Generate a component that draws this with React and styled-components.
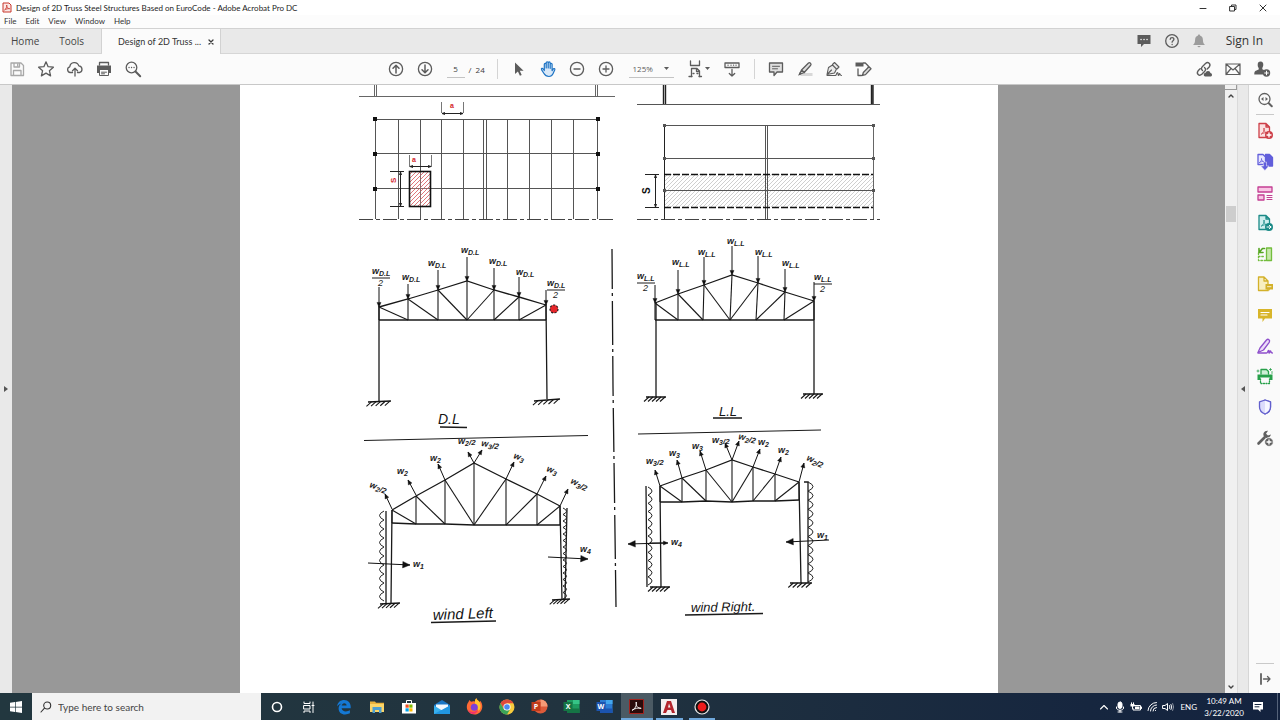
import React from "react";
import styled, { createGlobalStyle } from "styled-components";

const GlobalStyle = createGlobalStyle`
  *, *::before, *::after { box-sizing: border-box; }
  html, body { margin: 0; padding: 0; }
  body {
    font-family: "Open Sans", "Noto Sans", sans-serif;
    color: #3c3c3c;
    background: #fff;
  }
  button, input, select { font: inherit; color: inherit; }
`;

/* ---------- window chrome ---------- */

const Window = styled.div`
  display: flex;
  flex-direction: column;
  height: 100vh;
  overflow: hidden;
`;

const TitleBar = styled.header`
  display: flex;
  align-items: center;
  height: 15px;
  flex: none;
  padding-left: 2px;
  background: #fff;
`;

const Title = styled.h1`
  flex: 1;
  margin: 0 0 0 4px;
  font: 400 8px/14px "Lato", "Open Sans", sans-serif;
  color: #1c1c1c;
  white-space: nowrap;
`;

const WindowControls = styled.div`
  display: flex;
  padding-right: 2px;
`;

const PlainButton = styled.button`
  display: flex;
  align-items: center;
  justify-content: center;
  padding: 0;
  border: 0;
  background: transparent;
  line-height: 1;
  white-space: nowrap;
`;

const ControlButton = styled(PlainButton)`
  width: 30px;
  height: 14px;
  color: #333;
`;

const MenuBar = styled.nav`
  display: flex;
  gap: 9px;
  flex: none;
  height: 13px;
  padding-left: 4px;
  background: #fcfcfc;
`;

const MenuButton = styled(PlainButton)`
  font: 400 8px/13px "Lato", "Open Sans", sans-serif;
  color: #333;
`;

const TabBar = styled.div`
  display: flex;
  align-items: stretch;
  flex: none;
  height: 26px;
  border-top: 1px solid #d2d2d2;
  border-bottom: 1px solid #d6d6d6;
  background: #e9e9e9;
`;

const HomeTabs = styled.div`
  display: flex;
  gap: 20px;
  width: 102px;
  padding-left: 11px;
  border-right: 1px solid #d2d2d2;
`;

const TabButton = styled(PlainButton)`
  font-size: 10px;
  color: #444;
`;

const DocumentTabButton = styled(PlainButton)`
  font: 400 9px/12px "Lato", "Open Sans", sans-serif;
  color: #333;
`;

const DocumentTab = styled.div`
  display: flex;
  align-items: center;
  justify-content: space-between;
  width: 119px;
  margin-bottom: -1px;
  padding: 0 6px 0 16px;
  border-right: 1px solid #d2d2d2;
  background: #fbfbfb;
`;

const AccountTools = styled.div`
  display: flex;
  align-items: center;
  margin-left: auto;
  padding-right: 17px;
`;

const SignIn = styled(PlainButton)`
  margin-left: 13px;
  font-size: 12px;
  color: #333;
`;

/* ---------- toolbar ---------- */

const Toolbar = styled.div`
  display: grid;
  grid-template-columns: 1fr auto 1fr;
  align-items: center;
  flex: none;
  height: 30px;
  padding: 0 4px 0 2px;
  background: #fbfbfb;
`;

const ToolGroup = styled.div`
  display: flex;
  align-items: center;
  justify-content: ${(p) => p.$align || "flex-start"};
  margin-right: ${(p) => p.$trail || 0}px;
`;

const ToolButton = styled(PlainButton)`
  width: ${(p) => p.$width || 29}px;
  height: 24px;
  margin-left: ${(p) => p.$gap || 0}px;
  color: ${(p) => p.$color || "#5c5c5c"};
`;

const Divider = styled.span`
  width: 1px;
  height: 20px;
  margin: 0 7px 0 ${(p) => p.$before}px;
  background: #d4d4d4;
`;

const PageInput = styled.input`
  width: 18px;
  height: 18px;
  margin-left: 7px;
  padding: 0;
  border: 0;
  border-bottom: 1px solid #c4c4c4;
  background: transparent;
  font-size: 8px;
  text-align: center;
`;

const PageTotal = styled.span`
  width: 16px;
  margin-left: 4px;
  font-size: 8px;
  white-space: nowrap;
`;

const ZoomField = styled.label`
  display: flex;
  align-items: center;
  width: 45px;
  height: 18px;
  margin-left: 8px;
  padding-left: 4px;
  border-bottom: 1px solid #c4c4c4;
  color: #5c5c5c;
`;

const ZoomSelect = styled.select`
  width: 30px;
  padding: 0;
  border: 0;
  background: transparent;
  appearance: none;
  font-size: 8px;
`;

/* ---------- workspace ---------- */

const Workspace = styled.div`
  display: flex;
  flex: 1;
  min-height: 0;
  border-top: 1px solid #c8c8c8;
`;

const SideStrip = styled(PlainButton)`
  width: 12px;
  flex: none;
  align-self: stretch;
  border-left: ${(p) => (p.$right ? "1px solid #dadada" : "0")};
  border-right: ${(p) => (p.$right ? "1px solid #d6d6d6" : "0")};
  background: #e9e9e9;
  color: #555;
`;

const DocumentPane = styled.main`
  display: flex;
  justify-content: center;
  flex: 1;
  min-width: 0;
  overflow: hidden;
  background: #989898;
`;

const Page = styled.article`
  width: 758px;
  flex: none;
  background: #fff;
`;

const Drawing = styled.svg`
  display: block;
  width: 100%;
  font-family: "Liberation Sans", sans-serif;
`;

const ScrollTrack = styled.div`
  display: flex;
  flex-direction: column;
  align-items: center;
  width: 12px;
  flex: none;
  background: #f0f0f0;
`;

const SplitHandle = styled.div`
  width: 100%;
  height: 5px;
  border-right: 1px solid #999;
  border-bottom: 1px solid #999;
`;

const ScrollThumb = styled.div`
  width: 10px;
  height: 16px;
  margin-top: 104px;
  background: #cdcdcd;
`;

const ScrollArrow = styled(PlainButton)`
  width: 12px;
  height: 12px;
  margin-top: ${(p) => (p.$end ? "auto" : 0)};
  color: #444;
`;

const ToolsPane = styled.aside`
  display: flex;
  flex-direction: column;
  align-items: center;
  width: 31px;
  flex: none;
  background: #fafafa;
`;

const ToolsList = styled.div`
  display: grid;
  grid-auto-rows: 1fr;
  height: 337px;
  margin-top: 1px;
`;

const PaneButton = styled(PlainButton)`
  width: 30px;
  min-height: 29px;
  color: #606060;
`;

const PaneRule = styled.hr`
  width: 18px;
  height: 1px;
  margin: ${(p) => (p.$end ? "auto 0 0" : "0")};
  border: 0;
  background: #c9c9c9;
`;

/* ---------- taskbar ---------- */

const Taskbar = styled.footer`
  display: flex;
  align-items: stretch;
  flex: none;
  height: 27px;
  background: linear-gradient(90deg, #22373f 0%, #21333f 45%, #16263f 85%, #14233f 100%);
  color: #fff;
`;

const TaskButton = styled(PlainButton)`
  width: 32px;
`;

const SearchBox = styled.label`
  display: flex;
  align-items: center;
  gap: 6px;
  width: 229px;
  padding-left: 8px;
  background: #f2f2f2;
  color: #333;
`;

const SearchInput = styled.input`
  width: 180px;
  padding: 0;
  border: 0;
  outline: 0;
  background: transparent;
  font: 400 10px/14px "Lato", "Open Sans", sans-serif;
  &::placeholder { color: #444; opacity: 1; }
`;

const PinnedApps = styled.nav`
  display: grid;
  grid-auto-flow: column;
  grid-auto-columns: 1fr;
  width: 390px;
  margin-left: 3px;
`;

const AppButton = styled(PlainButton)`
  margin: 0 ${(p) => (p.$active ? 0 : 3)}px;
  padding-top: 2px;
  border-bottom: 2px solid ${(p) => (p.$running ? "#6fa8dc" : "transparent")};
  background: ${(p) => (p.$active ? "#4b5a64" : "transparent")};
  background-clip: padding-box;
`;

const Tray = styled.div`
  display: flex;
  align-items: center;
  margin-left: auto;
  font-size: 8px;
`;

const TrayButton = styled(PlainButton)`
  width: 16px;
  height: 20px;
`;

const Language = styled.span`
  margin-left: 4px;
  font: 400 8px/12px "Lato", sans-serif;
`;

const Clock = styled.time`
  width: 40px;
  margin-left: 7px;
  font: 400 8px/12px "Lato", sans-serif;
  text-align: center;
  white-space: nowrap;
`;

const ActionCenter = styled(TrayButton)`
  width: 28px;
  margin-right: 5px;
`;

const ShowDesktop = styled(PlainButton)`
  align-self: stretch;
  width: 3px;
  border-left: 1px solid #55637a;
`;

/* ---------- icons ---------- */

const Svg = ({ w = 18, h = w, children, sw = 1.3 }) => (
  <svg
    width={w}
    height={h}
    viewBox={`0 0 ${w} ${h}`}
    fill="none"
    stroke="currentColor"
    strokeWidth={sw}
    strokeLinecap="round"
    strokeLinejoin="round"
    aria-hidden="true"
  >
    {children}
  </svg>
);

const solid = { fill: "currentColor", stroke: "none" };

const icons = {
  save: (
    <Svg>
      <path d="M3 3h10l2.500 2.500V15.500H3z M6 3v4h5.500V3 M5.500 15.500v-5h7.500v5" />
      <path d="M9.700 4v2" />
    </Svg>
  ),
  star: (
    <Svg>
      <path d="M9 1.800l2.100 4.900 5.300.5-4 3.500 1.200 5.200L9 13.100l-4.600 2.800 1.200-5.200-4-3.500 5.300-.5z" />
    </Svg>
  ),
  cloud: (
    <Svg>
      <path d="M6.500 12.500H4.300a2.900 2.900 0 0 1-.5-5.700 4.600 4.600 0 0 1 9-.9 3.400 3.400 0 0 1 .9 6.600h-2.200 M9 16V8.500 M6.500 10.800L9 8.300l2.500 2.500" />
    </Svg>
  ),
  print: (
    <Svg>
      <path d="M4.500 5V2.500h9V5" />
      <path d="M2 5.500h14v7.500h-2v-3H4v3H2z" {...solid} />
      <path d="M4.500 10v5.500h9V10 M6.500 12.200h5 M6.500 13.800h3" strokeWidth="1" />
    </Svg>
  ),
  find: (
    <Svg>
      <circle cx="7.500" cy="7.500" r="5.300" />
      <path d="M11.500 11.500l4.700 4.700" strokeWidth="2" />
      <path d="M5 7.500h.1 M7.500 7.500h.1 M10 7.500h.1" strokeWidth="1.300" />
    </Svg>
  ),
  up: (
    <Svg>
      <circle cx="9" cy="9" r="6.600" />
      <path d="M9 13V5.500 M6 8.300l3-3 3 3" strokeWidth="1.500" />
    </Svg>
  ),
  down: (
    <Svg>
      <circle cx="9" cy="9" r="6.600" />
      <path d="M9 5v7.500 M6 9.700l3 3 3-3" strokeWidth="1.500" />
    </Svg>
  ),
  pointer: (
    <Svg>
      <path d="M5 2.500v11.600l2.900-2.600 2 4.300 1.800-.8-1.900-4.200h3.800z" {...solid} />
    </Svg>
  ),
  hand: (
    <Svg sw="1.200">
      <path
        d="M5.300 10.500V4.300c0-1.300 1.900-1.300 1.900 0V8 2.700c0-1.300 2-1.300 2 0V8 2.900c0-1.300 2-1.300 2 0V8.300 4.300c0-1.300 1.900-1.300 1.900 0v6.300l1-1.500c.7-1 2.100-.4 1.700.7l-1.800 4c-.8 1.800-1.700 2.700-4 2.700-3 0-4-1-5.200-3.200L2.500 9.600c-.5-1.200 1-1.700 1.600-.8z"
        fill="#d8e8f8"
      />
    </Svg>
  ),
  minus: (
    <Svg>
      <circle cx="9" cy="9" r="6.600" />
      <path d="M6 9h6" />
    </Svg>
  ),
  plus: (
    <Svg>
      <circle cx="9" cy="9" r="6.600" />
      <path d="M6 9h6 M9 6v6" />
    </Svg>
  ),
  caret: (
    <Svg w={7} h={5}>
      <path d="M1 1h5L3.500 4z" {...solid} />
    </Svg>
  ),
  fit: (
    <Svg w={26} h={18}>
      <path d="M3.500 1v4.500h9V1" />
      <path d="M4.500 16.500v-8h5.500l2.500 2.500v5.500 M9.500 8.500v3h3" />
      <path d="M2 16.500h3 M12 16.500h2.500 M6 13.500h1 M10 13.500h1" />
      <path d="M18 7h5l-2.500 3z" {...solid} />
    </Svg>
  ),
  read: (
    <Svg>
      <path d="M2 3h14v4.500H2z M5 5.200h.1 M8 5.200h.1 M10.500 5.200h.1 M13 5.200h.1 M9 9.500v6.500 M6.300 13.500L9 16l2.700-2.500" />
    </Svg>
  ),
  comment: (
    <Svg>
      <path d="M2.500 3h13v9H10l-3 3.500V12H2.500z" fill="#dedede" />
      <path d="M5.500 6.300h7 M5.500 8.800h5" strokeWidth="1" />
    </Svg>
  ),
  highlight: (
    <Svg>
      <path d="M7 13h9.500v3H4z" fill="#d8d8d8" stroke="none" />
      <path d="M3.500 14.500l2-4.500L12.500 3c1.200-1 3.300.7 2.200 2.200l-6.500 7.300z M5.500 10l3 2.600" fill="#dedede" />
      <path d="M2 15.800l2-4 2 2z" {...solid} />
    </Svg>
  ),
  sign: (
    <Svg sw="1.100">
      <path d="M2 14.500l1.500-7L7.500 5l4 4-2 4z M2 14.500L6.500 10 M7.500 4.500L9.500 2.500l4.500 4.500-2 2" fill="#eaeaea" />
      <path d="M2 15.500h8.500c1 0 1-3 2-3s0 3 1 3 .3-2 1-2 .3 2 2 2" />
    </Svg>
  ),
  stamp: (
    <Svg>
      <path d="M1.500 2.500h8v4h-8z" {...solid} />
      <path d="M9.500 3h1.800l3 3v1.500 M4 9v6.500h3.500" />
      <path d="M8.500 15.500l.8-3L15 6.800l2 2-5.500 5.800z" fill="#dedede" />
    </Svg>
  ),
  link: (
    <Svg sw="1.400">
      <path d="M7.500 10.500c-1.500-1.300-1.300-2.700 0-4l3-3c2.700-2.300 5.800.6 3.700 3.500l-2 2 M9.500 7.500c1.500 1.300 1.300 2.700 0 4l-2.700 2.800c-2.700 2.300-5.800-.6-3.700-3.500l2-2" />
      <path d="M10 16.500a1.900 1.900 0 0 1 .5-3.700 2.600 2.600 0 0 1 5 .3 1.800 1.800 0 0 1 .5 3.400z" {...solid} />
    </Svg>
  ),
  mail: (
    <Svg sw="1.200">
      <path d="M2 4h14v10.500H2z M2 4l7 6 7-6 M2 14.500L7 8.500 M16 14.500l-5-6" />
    </Svg>
  ),
  person: (
    <Svg>
      <path d="M7.500 1.500c2.300 0 3.200 1.700 2.700 4.200-.2 1-.7 1.500-.9 2.200v1.300l2.700 1.200c-1.600 1-2.300 2.400-2 4.100H1.300c0-3.200.8-3.700 4.400-5V7.900c-.8-.9-1-1.700-1-3.200 0-2 1-3.200 2.800-3.200z" {...solid} />
      <circle cx="13.500" cy="13" r="3.700" {...solid} />
      <path d="M11.700 13h3.600 M13.500 11.200v3.600" stroke="#fff" strokeWidth="1" />
    </Svg>
  ),
  chat: (
    <Svg w={16}>
      <path d="M1.500 2h13v9H8l-3 3v-3H1.500z" {...solid} />
      <path d="M5 6.500h.1 M8 6.500h.1 M11 6.500h.1" stroke="#fff" strokeWidth="1.400" />
    </Svg>
  ),
  help: (
    <Svg w={16}>
      <circle cx="8" cy="8" r="6.300" />
      <path d="M6.200 6.300c.1-2.300 3.800-2.200 3.700 0 0 1.300-1.800 1.400-1.800 2.900 M8.100 11.500h.1" />
    </Svg>
  ),
  bell: (
    <Svg w={16}>
      <path d="M8 1.500c.8 0 1 .5 1 1 2 .7 2.800 2 2.900 4.300.1 2.800.6 3.900 2.100 5.200H2c1.500-1.300 2-2.400 2.100-5.200C4.200 4.500 5 3.200 7 2.500c0-.5.200-1 1-1z M6.500 13h3a1.500 1.300 0 0 1-3 0z" {...solid} />
    </Svg>
  ),
  arrowLeft: (
    <Svg w={6} h={8}>
      <path d="M5 1v6L1 4z" {...solid} />
    </Svg>
  ),
  arrowRight: (
    <Svg w={6} h={8}>
      <path d="M1 1v6l4-3z" {...solid} />
    </Svg>
  ),
};

const PdfSheet = ({ tone, tint, children }) => (
  <Svg>
    <path d="M3 1.500h7l3.500 3.500v10.500H3z M10 1.500V5h3.500" stroke={tone} fill={tint} />
    <path d="M5.500 12c2-1 3-4.200 2.500-6-.5 3 1 4.800 3.500 4.800-2-.4-4.500.2-6 1.200z" stroke={tone} strokeWidth=".8" />
    {children}
  </Svg>
);

const paneTools = [
  {
    label: "Create PDF",
    icon: (
      <PdfSheet tone="#cd3f48" tint="#fbe1e2">
        <circle cx="13" cy="13" r="4" fill="#cd3f48" stroke="none" />
        <path d="M11 13h4 M13 11v4" stroke="#fff" />
      </PdfSheet>
    ),
  },
  {
    label: "Combine Files",
    icon: (
      <Svg>
        <path d="M9.500 1.500h4l3 3v8.500H9.500z" fill="#615edb" stroke="#615edb" />
        <path d="M2 1.500h5l2.500 2.500v7.500H2z" stroke="#615edb" fill="#e9e8ff" />
        <path d="M3.500 9.500c1.500-1 2.200-2.500 2-4 0 2 .8 3 2.500 3-1.500 0-3 0-4.500 1z" stroke="#615edb" strokeWidth=".8" />
        <path d="M7.300 9h3.200v4h2.500l-4.100 4.500L4.800 13h2.500z" fill="#615edb" stroke="#fafafa" strokeWidth=".5" />
      </Svg>
    ),
  },
  {
    label: "Organize Pages",
    icon: (
      <Svg>
        <path d="M2 3h14v5H2z M2 11h6v5H2z" stroke="#c33e93" fill="#f9c5e4" />
        <path d="M11 11.500h5 M11 13.500h5 M11 15.500h5" stroke="#c33e93" strokeWidth="1" />
      </Svg>
    ),
  },
  {
    label: "Export PDF",
    icon: (
      <PdfSheet tone="#1b8a87" tint="#cfeeee">
        <circle cx="13" cy="13" r="4" fill="#1b8a87" stroke="none" />
        <path d="M11 13h4 M13.300 11.300L15 13l-1.700 1.700" stroke="#fff" strokeWidth="1" />
      </PdfSheet>
    ),
  },
  {
    label: "Compare Files",
    icon: (
      <Svg>
        <path d="M10.500 3h5v12.500h-5z" stroke="#73bd3d" fill="#c7e8ab" />
        <path d="M2.500 8v7.500h7 M2.500 11.500h6" stroke="#73bd3d" strokeDasharray="1.500 1.800" />
        <path d="M8.500 3.500h-2L3.500 7 M3 3.500v4h4" stroke="#55a522" strokeWidth="1.600" />
      </Svg>
    ),
  },
  {
    label: "Send for Comments",
    icon: (
      <Svg>
        <path d="M2.500 2h5.500l4 4v9.500H2.500z M8 2v4h4" stroke="#d3b12a" fill="#f8efc0" />
        <path d="M9.500 9H17v5.500h-3l-1.500 2v-2h-3z" fill="#d3b12a" stroke="none" />
        <path d="M11.500 11.700h3.500" stroke="#fff" strokeWidth=".8" />
      </Svg>
    ),
  },
  {
    label: "Comment",
    icon: (
      <Svg>
        <path d="M2 3h14v9.500H9L6.500 16v-3.500H2z" fill="#d8b52a" stroke="none" />
        <path d="M5 6.500h8 M5 9h6" stroke="#fff" strokeWidth="1.200" />
      </Svg>
    ),
  },
  {
    label: "Fill & Sign",
    icon: (
      <Svg>
        <path d="M2 15.500L4 11l6.500-8c1.700-1.700 4 .3 2.700 2.300L7.500 13z" stroke="#8e4fcb" fill="#ecddf9" />
        <path d="M2 16h8.500c1.500 0 1-2.500 2-2.500s-.3 2.500.7 2.500.4-2 1.200-2 .2 2 2 2" stroke="#8e4fcb" />
      </Svg>
    ),
  },
  {
    label: "Scan & OCR",
    icon: (
      <Svg>
        <path d="M5 7V2.500h5.500l2 2V7" stroke="#27a04a" fill="#cdeed5" />
        <path d="M1.500 7.500h15V13h-2.700v-2.500H4.200V13H1.500z" fill="#27a04a" stroke="none" />
        <path d="M4.500 12v4.500h9V12" stroke="#27a04a" strokeDasharray="1 1.500" />
        <path d="M2 3v2 M1 4h2 M14.500 1.500v2 M13.500 2.500h2 M16 4.500v2" stroke="#27a04a" strokeWidth=".8" />
      </Svg>
    ),
  },
  {
    label: "Protect",
    icon: (
      <Svg>
        <path d="M9 2l5.500 1.800V9c0 3.500-2.400 5.800-5.500 7-3.100-1.200-5.500-3.500-5.500-7V3.800z" stroke="#625fcd" fill="#dcdcfb" />
        <path d="M9 2l5.500 1.800V9c0 3.500-2.400 5.800-5.500 7z" stroke="none" fill="#f6f6ff" />
        <path d="M9 2l5.500 1.800V9c0 3.500-2.400 5.800-5.500 7" stroke="#625fcd" />
      </Svg>
    ),
  },
  {
    label: "More Tools",
    icon: (
      <Svg>
        <path d="M2.500 14.500l6-6" stroke="#606060" strokeWidth="2.600" />
        <path d="M12 1.800c-4-.4-5.600 3-4 5.800 1.200 2.100 5.800 2 7-2.100l-3 1-2-1.800z" fill="#606060" stroke="none" />
        <circle cx="13" cy="13" r="4.300" fill="#606060" stroke="#fafafa" strokeWidth=".8" />
        <path d="M11 13h4 M13 11v4" stroke="#fff" />
      </Svg>
    ),
  },
];

const OfficeIcon = ({ letter, round, dark, main, light }) => (
  <svg width="17" height="17" viewBox="0 0 17 17" aria-hidden="true">
    {round ? (
      <>
        <circle cx="9.500" cy="8.500" r="7" fill={main} />
        <path d="M9.500 1.500a7 7 0 0 1 7 7h-7z" fill={light} />
      </>
    ) : (
      <>
        <path d="M4 2h12.500v13H4z" fill={main} />
        <path d="M10 2h6.500v4H10z" fill={light} />
        <path d="M4 10.500h12.500V15H4z" fill={dark} />
      </>
    )}
    <path d="M.5 4h9v9h-9z" fill={dark} />
    <text x="5" y="11" textAnchor="middle" fontFamily="Open Sans, sans-serif" fontSize="7" fontWeight="700" fill="#fff">
      {letter}
    </text>
  </svg>
);

const apps = [
  {
    label: "Microsoft Edge",
    icon: (
      <svg width="16" height="16" viewBox="0 0 16 16">
        <path
          d="M1 7.500C1.800 3 4.600 1 8.200 1c4 0 6.500 3 6.500 6.800v1.400H5.600c.2 2 2 3.200 4.300 3.200 1.500 0 2.800-.4 4-1.100v3c-1.300.7-2.900 1.100-4.800 1.100-3.900 0-6.500-2.300-6.500-6 0-2.200 1-4 2.900-5C3.300 4.800 2 6 1 7.500zM5.700 6.600h4.900c0-1.500-.8-2.400-2.300-2.400-1.400 0-2.300.9-2.600 2.400z"
          fill="#1478d4"
        />
      </svg>
    ),
  },
  {
    label: "File Explorer",
    icon: (
      <svg width="16" height="16" viewBox="0 0 16 16">
        <path d="M1 2.500h5l1 1.300h8V13H1z" fill="#e9b23c" />
        <path d="M1 5h14v8H1z" fill="#fbd568" />
        <path d="M3.500 8h9v6h-2.500v-3H6v3H3.500z" fill="#4d9fd0" />
      </svg>
    ),
  },
  {
    label: "Microsoft Store",
    icon: (
      <svg width="16" height="16" viewBox="0 0 16 16">
        <path d="M5.500 4V1.500h5V4" fill="none" stroke="#fff" strokeWidth="1" />
        <path d="M1 4h14v10.500H1z" fill="#fff" />
        <path d="M4.500 5.500h3.200v3.200H4.500z" fill="#f25022" />
        <path d="M8.300 5.500h3.200v3.200H8.300z" fill="#7fba00" />
        <path d="M4.500 9.300h3.200v3.200H4.500z" fill="#00a4ef" />
        <path d="M8.300 9.300h3.200v3.200H8.300z" fill="#ffb900" />
      </svg>
    ),
  },
  {
    label: "Mail",
    icon: (
      <svg width="18" height="16" viewBox="0 0 18 16">
        <path d="M1 6l8-5 8 5v9H1z" fill="#1976c5" />
        <path d="M3 5.500h12V9l-6 3-6-3z" fill="#f2f8fd" />
        <path d="M1 6.500l8 5 8-5V15H1z" fill="#39b0ee" />
        <path d="M1 15l16-8.500V15z" fill="#2196e0" />
      </svg>
    ),
  },
  {
    label: "Firefox",
    icon: (
      <svg width="17" height="17" viewBox="0 0 17 17">
        <path d="M2.500 4l.8-2 1.700 1.700C6.500 3 8 3 9 3.500 8.800 2.300 9.300 1 10.500.3c.3 2 2 2.400 3 3.700.5-.2.600-.8.600-1.300 1.500 1.600 2.400 3.800 2.200 6.200C16 13.300 12.700 16.500 8.500 16.500S.8 13.200.8 9c0-2 .6-3.700 1.700-5z" fill="#ff6a35" />
        <path d="M9 3.500C9 2 9.500 1 10.500.3c.3 2 2 2.400 3 3.700 1.800 3 1.500 7-1 9-.5-4-4-5-3.500-9.500z" fill="#ffc22e" />
        <circle cx="8.300" cy="9.300" r="3.500" fill="#7b40d8" />
        <path d="M2 11.500c2.500 3 7 3 10 .5-1 2.700-3 4.200-5.500 4C4.200 15.600 2.700 14 2 11.500z" fill="#f0316c" />
      </svg>
    ),
  },
  {
    label: "Google Chrome",
    icon: (
      <svg width="16" height="16" viewBox="0 0 16 16">
        <circle cx="8" cy="8" r="7.500" fill="#f7cb3c" />
        <path d="M1.500 4.250A7.500 7.500 0 0 1 14.500 4.250H8L4.750 9.900z" fill="#de4a3b" />
        <path d="M1.500 4.250A7.500 7.500 0 0 0 8 15.500l3.300-5.600L8 11.500 4.750 9.900z" fill="#3ba558" />
        <circle cx="8" cy="8" r="3.600" fill="#fff" />
        <circle cx="8" cy="8" r="2.800" fill="#4a8af0" />
      </svg>
    ),
  },
  { label: "PowerPoint", icon: <OfficeIcon letter="P" round dark="#c13b1b" main="#dc5b3a" light="#f59a76" /> },
  { label: "Excel", icon: <OfficeIcon letter="X" dark="#157545" main="#1f9c60" light="#36c486" /> },
  { label: "Word", icon: <OfficeIcon letter="W" dark="#1b54b0" main="#2b7bd3" light="#43a6ee" /> },
  {
    label: "Adobe Acrobat",
    active: true,
    icon: (
      <svg width="15" height="15" viewBox="0 0 15 15">
        <path d="M.5.5h14v14H.5z" fill="#2a0b0b" stroke="#a3221d" />
        <path d="M3 11.300c3-1.300 5-4.800 4.200-8.300-.5 3.800 1.500 6.600 5 6.300-3-.8-6 0-9.200 2z" fill="none" stroke="#fff" strokeWidth=".9" />
      </svg>
    ),
  },
  {
    label: "AutoCAD",
    running: true,
    icon: (
      <svg width="16" height="16" viewBox="0 0 16 16">
        <path d="M0 0h16v16H0z" fill="#f4eeee" />
        <path d="M2 14L6 2h4l4 12h-3l-1-3H6.500L5 14z M7 8.500h2.500L8 4.500z" fill="#b3242c" fillRule="evenodd" />
      </svg>
    ),
  },
  {
    label: "Screen Recorder",
    running: true,
    icon: (
      <svg width="16" height="16" viewBox="0 0 16 16">
        <circle cx="8" cy="8" r="7" fill="#111" stroke="#e8e8e8" strokeWidth="1.200" />
        <circle cx="8" cy="8" r="4.400" fill="#ee1c1c" />
      </svg>
    ),
  },
];

/* ---------- engineering drawing ---------- */

const pts = (list) => list.map((p) => p.join(",")).join(" ");

const Arrow = ({ from, to, size = 5, width = 1 }) => {
  const [x1, y1] = from;
  const [x2, y2] = to;
  const a = Math.atan2(y2 - y1, x2 - x1);
  const wing = (d) => [x2 - size * Math.cos(a + d), y2 - size * Math.sin(a + d)];
  return (
    <g>
      <path d={`M${x1} ${y1}L${x2} ${y2}`} stroke="#111" strokeWidth={width} />
      <polygon points={pts([to, wing(0.42), wing(-0.42)])} fill="#111" stroke="#111" strokeWidth=".4" />
    </g>
  );
};

const Truss = ({ top, bottom }) => {
  const mid = (top.length - 1) / 2;
  return (
    <g fill="none" stroke="#181818" strokeWidth="1.100">
      <polyline points={pts(top)} strokeWidth="1.300" />
      <polyline points={pts(bottom)} strokeWidth="1.300" />
      {top.map((t, i) => (
        <path key={i} d={`M${t}L${bottom[i]}`} />
      ))}
      {top.map((t, i) =>
        i === mid ? null : <path key={i} d={`M${t}L${bottom[i < mid ? i + 1 : i - 1]}`} />
      )}
    </g>
  );
};

const Support = ({ x, y, length = 22, rise = 0 }) => (
  <g stroke="#151515" strokeWidth="1.100">
    <path d={`M${x} ${y}l${length} ${-rise}`} strokeWidth="1.500" />
    {[0.15, 0.35, 0.55, 0.75, 0.95].map((f) => (
      <path key={f} d={`M${x + length * f} ${y - rise * f}l-5 4.500`} />
    ))}
  </g>
);

const Scallops = ({ x, y, height, count, bulge }) => {
  const step = height / count;
  const d = Array.from({ length: count }, () => `q${bulge} ${step / 2} 0 ${step}`).join("");
  return <path d={`M${x} ${y}${d}`} fill="none" stroke="#222" strokeWidth="1" />;
};

/* Diagonal hatching clipped to a rectangle */
const Hatch = ({ id, x, y, width, height, gap, color, weight = 1 }) => {
  const lines = [];
  for (let s = gap; s < width + height; s += gap) {
    lines.push(`M${x + s - height} ${y + height}l${height} ${-height}`);
  }
  return (
    <g>
      <clipPath id={id}>
        <rect x={x} y={y} width={width} height={height} />
      </clipPath>
      <path d={lines.join("")} clipPath={`url(#${id})`} fill="none" stroke={color} strokeWidth={weight} />
    </g>
  );
};

/* A load symbol such as w with its subscript, optionally halved */
const Load = ({ x, y, sub, half, stacked, turn = 0 }) => (
  <g transform={`rotate(${turn} ${x} ${y})`}>
    <text x={x} y={y} fontSize="9" fontStyle="italic" fontWeight="700" fill="#1c1c1c">
      w
      <tspan fontSize="7" dy="2">
        {sub}
      </tspan>
      {half && <tspan dy="-1" fontSize="8">/2</tspan>}
    </text>
    {stacked && (
      <>
        <path d={`M${x} ${y + 4}h18`} stroke="#1c1c1c" strokeWidth="1" />
        <text x={x + 6} y={y + 12} fontSize="9" fontStyle="italic" fill="#1c1c1c">
          2
        </text>
      </>
    )}
  </g>
);

const deadLoad = {
  top: [[379, 307], [408, 299], [438, 290], [467, 281], [494, 290], [519, 297], [546, 305]],
  bottom: [[379, 320], [408, 320], [438, 320], [467, 320], [494, 320], [519, 320], [546, 320]],
  tails: [287, 284, 270, 257, 268, 277, 290],
  labels: [[372, 274], [402, 280], [428, 266], [461, 253], [489, 264], [516, 275], [547, 286]],
};

const liveLoad = {
  top: [[655, 303], [678, 294], [704, 285], [732, 275], [758, 283], [785, 292], [814, 301]],
  bottom: [[655, 320], [678, 320], [703, 320], [730, 320], [756, 320], [784, 320], [814, 320]],
  tails: [285, 270, 257, 246, 256, 269, 282],
  labels: [[637, 279], [672, 265], [698, 255], [727, 244], [755, 255], [782, 266], [814, 280]],
};

const windLeft = {
  top: [[392, 510], [416, 496], [445, 480], [474, 463], [506, 479], [537, 494], [560, 506]],
  bottom: [[392, 523], [416, 524], [445, 524], [474, 525], [506, 525], [537, 525], [560, 525]],
  uplift: [
    [[392, 509], [385, 494]],
    [[416, 495], [408, 480]],
    [[445, 480], [438, 464]],
    [[474, 463], [468, 452]],
    [[474, 463], [482, 450]],
    [[506, 479], [514, 462]],
    [[537, 494], [546, 476]],
    [[560, 506], [568, 489]],
  ],
  labels: [
    [369, 487, "2", true, 20], [397, 474, "2"], [430, 461, "2"], [458, 444, "2", true],
    [481, 446, "3", true, 8], [513, 458, "3", false, 20], [546, 471, "3", false, 20], [570, 483, "3", true, 25],
  ],
};

const windRight = {
  top: [[660, 486], [682, 478], [706, 470], [732, 460], [753, 467], [775, 474], [799, 482]],
  bottom: [[660, 502], [682, 502], [706, 501], [732, 502], [753, 501], [775, 501], [799, 500]],
  uplift: [
    [[660, 486], [655, 470]],
    [[682, 478], [677, 460]],
    [[706, 470], [700, 451]],
    [[732, 460], [725, 443]],
    [[732, 460], [739, 441]],
    [[753, 467], [760, 449]],
    [[775, 474], [781, 457]],
    [[799, 482], [804, 463]],
  ],
  labels: [
    [646, 464, "3", true], [669, 456, "3"], [692, 449, "3"], [712, 443, "3", true],
    [738, 439, "2", true, 12], [758, 445, "2"], [778, 453, "2"], [806, 460, "2", true, 24],
  ],
};

const DimensionArrow = ({ d, ends }) => (
  <path d={`${d}${ends}`} stroke="#222" strokeWidth="1" fill="none" />
);

const Plans = () => (
  <g fill="none" stroke="#444" strokeWidth="1">
    <path d="M374.500 84V96 M376.500 84V96 M595.500 84V96 M597.500 84V96 M359 96.500H615" stroke="#666" />
    <path d="M441.500 102V113 M463.500 102V113" stroke="#777" />
    <DimensionArrow d="M442 113.500H463" ends="M445 112.500l-3 1 3 1 M460 112.500l3 1-3 1" />
    <path d="M375 119.500H598 M375 153.500H598 M375 188.500H598" stroke="#555" />
    {[375, 398, 420, 441, 463, 483, 486, 507, 529, 551, 573, 597].map((x) => (
      <path key={x} d={`M${x + 0.5} 119V219`} stroke="#555" />
    ))}
    {[119, 154, 189].map((y) => (
      <path key={y} d={`M373 ${y - 2}h4v4h-4z M596 ${y - 2}h4v4h-4z`} fill="#111" stroke="none" />
    ))}
    <path d="M359 219.500H615 M637 219.500H880" stroke="#444" strokeDasharray="14 3 4 3" />
    <rect x="409" y="171" width="22" height="36" fill="#fff" stroke="none" />
    <Hatch id="purlin-area" x={409} y={171} width={22} height={36} gap={4} color="#e0787c" />
    <path d="M420.500 171V206 M409 188.500H431" stroke="#8a6a6a" />
    <rect x="409.500" y="171.500" width="21" height="35" stroke="#111" strokeWidth="1.600" />
    <path d="M409.500 155V167 M431.500 155V167" stroke="#777" />
    <DimensionArrow d="M410 166.500H431" ends="M413 165.500l-3 1 3 1 M428 165.500l3 1-3 1" />
    <DimensionArrow d="M390 171.500H404 M390 206.500H404 M400.500 172V206" ends="M399.500 175l1-3 1 3 M399.500 203l1 3 1-3" />

    <path d="M663.500 84V104 M665.500 84V104 M871.500 84V104 M873 84V104" stroke="#222" strokeWidth="1.400" />
    <path d="M637 104.500H880" stroke="#555" />
    <Hatch id="frame-area" x={664} y={174} width={209} height={33} gap={4} color="#cfcfcf" />
    <path d="M664 125.500H873 M664 158.500H873 M664 190.500H873 M765.500 125V219 M767.500 125V219" stroke="#555" />
    <path d="M664.500 125V219" stroke="#222" />
    <path d="M873.500 125V219" stroke="#666" />
    <path d="M664 174.500H873 M664 207.500H873" stroke="#111" strokeWidth="1.500" strokeDasharray="7 2" />
    {[125, 158, 190].map((y) => (
      <path key={y} d={`M663 ${y - 1}h3v3h-3z M872 ${y - 1}h3v3h-3z`} fill="#555" stroke="none" />
    ))}
    <DimensionArrow d="M645 174.500H659 M645 207.500H659 M655.500 175V207" ends="M654.500 178l1-3 1 3 M654.500 204l1 3 1-3" />
    <g stroke="none" fontWeight="700">
      <text x="450" y="108" fontSize="7" fill="#d3232a">a</text>
      <text x="412" y="162" fontSize="7" fill="#d3232a">a</text>
      <text transform="translate(396 183) rotate(-90)" fontSize="8" fill="#d3232a">S</text>
      <text transform="translate(650 194) rotate(-90)" fontSize="10" fill="#111">S</text>
    </g>
  </g>
);

const VerticalLoads = ({ data, sub }) => (
  <g>
    <Truss top={data.top} bottom={data.bottom} />
    {data.top.map(([x, y], i) => (
      <Arrow key={i} from={[x, data.tails[i]]} to={[x, y]} />
    ))}
    {data.labels.map(([x, y], i) => (
      <Load key={i} x={x} y={y} sub={sub} stacked={i === 0 || i === 6} />
    ))}
  </g>
);

const WindLoads = ({ data }) => (
  <g>
    <Truss top={data.top} bottom={data.bottom} />
    {data.uplift.map(([from, to], i) => (
      <Arrow key={i} from={from} to={to} />
    ))}
    {data.labels.map(([x, y, sub, half, turn], i) => (
      <Load key={i} x={x} y={y} sub={sub} half={half} turn={turn} />
    ))}
  </g>
);

const TrussDrawing = () => (
  <Drawing viewBox="240 85 758 608" role="img" aria-label="Truss load cases">
    <Plans />

    <VerticalLoads data={deadLoad} sub="D.L" />
    <VerticalLoads data={liveLoad} sub="L.L" />
    <WindLoads data={windLeft} />
    <WindLoads data={windRight} />

    <g fill="none" stroke="#1a1a1a" strokeWidth="1.300">
      <path d="M379 306V401 M546 304L547 399" />
      <path d="M656 303V397 M814 301L814 394" />
      <path d="M392 510L391 603 M386 511V603" />
      <path d="M560 506L562 600 M567 508L565 600" />
      <path d="M660 486L661 587 M646 486L647 587" />
      <path d="M799 482L801 583 M804 482h4L808 583" />
      <path d="M364 440.500L588 435.500 M638 434L821 430" strokeWidth="1" />
      <path d="M612 249L613 387L616 607" strokeDasharray="40 4 3 5 44 4 3 4" />
      <path d="M440 427L467 427.500 M713 418H742 M431 622.500L496 621 M685 615L763 613.500" />
    </g>
    <Support x={368} y={402} length={23} rise={1} />
    <Support x={534} y={401} length={26} rise={2} />
    <Support x={646} y={397} length={20} />
    <Support x={803} y={394} length={20} />
    <Support x={380} y={604} length={20} rise={1} />
    <Support x={552} y={600} length={18} rise={1} />
    <Support x={650} y={587} length={20} />
    <Support x={790} y={583} length={22} />

    <Scallops x={384} y={511} height={90} count={10} bulge={-9} />
    <Scallops x={563} y={508} height={91} count={14} bulge={7} />
    <Scallops x={648} y={487} height={98} count={12} bulge={8} />
    <Scallops x={808} y={482} height={100} count={11} bulge={10} />

    <Arrow from={[368, 563]} to={[410, 565]} size={8} />
    <Arrow from={[548, 557]} to={[588, 559]} size={8} />
    <Arrow from={[666, 543]} to={[628, 544]} size={8} />
    <Arrow from={[650, 543]} to={[668, 543]} />
    <Arrow from={[829, 540]} to={[786, 542]} size={8} />
    <Load x={413} y={567} sub="1" />
    <Load x={580} y={552} sub="4" />
    <Load x={671} y={545} sub="4" />
    <Load x={817} y={538} sub="1" />

    <g fill="#141414" fontStyle="italic">
      <text x="438" y="424" fontSize="14">D.L</text>
      <text x="719" y="416" fontSize="13">L.L</text>
      <text x="433" y="620" fontSize="15" transform="rotate(-2 433 620)">wind Left</text>
      <text x="691" y="612" fontSize="13" transform="rotate(-1 691 612)">wind Right.</text>
    </g>
    <circle cx="554" cy="309" r="4" fill="#e5262b" stroke="#222" strokeWidth="1.200" strokeDasharray="2 1.500" />
  </Drawing>
);

/* ---------- app ---------- */

const Tool = ({ label, name, ...rest }) => (
  <ToolButton type="button" aria-label={label} {...rest}>
    {icons[name]}
  </ToolButton>
);

export default function App() {
  return (
    <Window>
      <GlobalStyle />
      <TitleBar>
        <svg width="10" height="11" viewBox="0 0 10 11" aria-hidden="true">
          <path d="M1 1h6l2 2v7H1z" fill="#fbe8e6" stroke="#c7362c" />
          <path d="M2.500 8C4 7 5 5 4.700 3c0 2.500 1 3.500 3 3.700C6 6.500 4 7 2.500 8z" fill="none" stroke="#c7362c" strokeWidth=".8" />
        </svg>
        <Title>Design of 2D Truss Steel Structures Based on EuroCode - Adobe Acrobat Pro DC</Title>
        <WindowControls>
          <ControlButton type="button" aria-label="Minimize">
            <Svg w={8} sw="1"><path d="M1 4.500h6" /></Svg>
          </ControlButton>
          <ControlButton type="button" aria-label="Restore">
            <Svg w={8} sw="1"><path d="M1 2.500h4.500V7H1z M2.500 2.500V1H7v4.500H5.500" /></Svg>
          </ControlButton>
          <ControlButton type="button" aria-label="Close">
            <Svg w={8} sw="1"><path d="M1 1l6 6 M7 1L1 7" /></Svg>
          </ControlButton>
        </WindowControls>
      </TitleBar>

      <MenuBar aria-label="Menu">
        {["File", "Edit", "View", "Window", "Help"].map((item) => (
          <MenuButton type="button" key={item}>{item}</MenuButton>
        ))}
      </MenuBar>

      <TabBar>
        <HomeTabs>
          <TabButton type="button">Home</TabButton>
          <TabButton type="button">Tools</TabButton>
        </HomeTabs>
        <DocumentTab>
          <DocumentTabButton type="button">Design of 2D Truss ...</DocumentTabButton>
          <PlainButton type="button" aria-label="Close tab">
            <Svg w={6} sw="1.300"><path d="M1 1l4 4 M5 1L1 5" /></Svg>
          </PlainButton>
        </DocumentTab>
        <AccountTools>
          <Tool label="Comments" name="chat" $width={27} />
          <Tool label="Help" name="help" $width={28} />
          <Tool label="Notifications" name="bell" $width={27} $color="#9c9c9c" />
          <SignIn type="button">Sign In</SignIn>
        </AccountTools>
      </TabBar>

      <Toolbar>
        <ToolGroup>
          <Tool label="Save" name="save" $color="#a8a8a8" />
          <Tool label="Star" name="star" />
          <Tool label="Upload" name="cloud" />
          <Tool label="Print" name="print" />
          <Tool label="Find" name="find" />
        </ToolGroup>
        <ToolGroup $trail={19}>
          <Tool label="Previous page" name="up" />
          <Tool label="Next page" name="down" />
          <PageInput aria-label="Page number" defaultValue="5" />
          <PageTotal>/&nbsp; 24</PageTotal>
          <Divider $before={12} />
          <Tool label="Select" name="pointer" />
          <Tool label="Pan" name="hand" $color="#1f74c4" />
          <Tool label="Zoom out" name="minus" />
          <Tool label="Zoom in" name="plus" />
          <ZoomField>
            <ZoomSelect aria-label="Zoom level" defaultValue="125%">
              <option>125%</option>
            </ZoomSelect>
            {icons.caret}
          </ZoomField>
          <Tool label="Fit page" name="fit" $width={32} $gap={10} />
          <Tool label="Read mode" name="read" $gap={2} />
          <Divider $before={7} />
          <Tool label="Comment" name="comment" />
          <Tool label="Highlight" name="highlight" />
          <Tool label="Sign" name="sign" />
          <Tool label="Stamp" name="stamp" />
        </ToolGroup>
        <ToolGroup $align="flex-end">
          <Tool label="Share link" name="link" />
          <Tool label="Send by email" name="mail" />
          <Tool label="Add people" name="person" />
        </ToolGroup>
      </Toolbar>

      <Workspace>
        <SideStrip type="button" aria-label="Show navigation pane">{icons.arrowRight}</SideStrip>
        <DocumentPane>
          <Page>
            <TrussDrawing />
          </Page>
        </DocumentPane>
        <ScrollTrack>
          <SplitHandle />
          <ScrollArrow type="button" aria-label="Scroll up">
            <Svg w={6} sw="1.400"><path d="M1 4l2-2 2 2" /></Svg>
          </ScrollArrow>
          <ScrollThumb />
          <ScrollArrow type="button" aria-label="Scroll down" $end>
            <Svg w={6} sw="1.400"><path d="M1 2l2 2 2-2" /></Svg>
          </ScrollArrow>
        </ScrollTrack>
        <SideStrip type="button" aria-label="Hide tools pane" $right>{icons.arrowLeft}</SideStrip>
        <ToolsPane>
          <PaneButton type="button" aria-label="Search tools">
            <Svg>
              <circle cx="8.500" cy="8" r="5.500" />
              <path d="M12.800 12.300l3 3" strokeWidth="2" />
              <path d="M7.500 6v4L5 8z M9.500 6v4L12 8z" {...solid} />
            </Svg>
          </PaneButton>
          <PaneRule />
          <ToolsList>
            {paneTools.map((tool) => (
              <PaneButton type="button" key={tool.label} aria-label={tool.label}>{tool.icon}</PaneButton>
            ))}
          </ToolsList>
          <PaneRule $end />
          <PaneButton type="button" aria-label="Collapse tools">
            <Svg w={14}><path d="M3 2v10" strokeWidth="1.800" /><path d="M5.500 7H12 M9.500 4.500L12 7 9.500 9.500" /></Svg>
          </PaneButton>
        </ToolsPane>
      </Workspace>

      <Taskbar>
        <TaskButton type="button" aria-label="Start">
          <svg width="12" height="12" viewBox="0 0 12 12" fill="#fff">
            <path d="M0 1.800l5-.8v4.700H0z M5.700.9L12 0v5.700H5.700z M0 6.400h5v4.700l-5-.8z M5.700 6.400H12V12l-6.300-.9z" />
          </svg>
        </TaskButton>
        <SearchBox>
          <Svg w={12} sw="1.100"><circle cx="7.200" cy="4.500" r="3.500" /><path d="M4.500 7.200L1 11" /></Svg>
          <SearchInput type="search" placeholder="Type here to search" aria-label="Search" />
        </SearchBox>
        <TaskButton type="button" aria-label="Cortana">
          <Svg w={12} sw="1.600"><circle cx="6" cy="6" r="4.500" /></Svg>
        </TaskButton>
        <TaskButton type="button" aria-label="Task view">
          <Svg w={12} sw="1"><path d="M1 1v1.500h6V1 M1 4.500h6v3.500H1z M1 11.500V10h6v1.500 M10 1v10.500 M9 4.500h2" /></Svg>
        </TaskButton>
        <PinnedApps aria-label="Pinned apps">
          {apps.map((app) => (
            <AppButton
              type="button"
              key={app.label}
              aria-label={app.label}
              $active={app.active}
              $running={app.running || app.active}
            >
              {app.icon}
            </AppButton>
          ))}
        </PinnedApps>
        <Tray>
          <TrayButton type="button" aria-label="Show hidden icons">
            <Svg w={10} sw="1.100"><path d="M1.500 7L5 3.500 8.500 7" /></Svg>
          </TrayButton>
          <TrayButton type="button" aria-label="Microphone">
            <Svg w={10} h={12} sw="1">
              <rect x="3" y="1" width="4" height="6.500" rx="2" fill="currentColor" />
              <path d="M1.500 6v1c0 3 7 3 7 0V6 M5 9.500V11 M3 11h4" />
            </Svg>
          </TrayButton>
          <TrayButton type="button" aria-label="Battery">
            <Svg w={12} h={10} sw="1">
              <path d="M4 3.500h6.500v4.500H3V6.500 M11.500 5v1.500" />
              <path d="M5 4.500h4.500V7H5z M.5 2h4v2.500h-4z" {...solid} />
              <path d="M1.500 2V.8 M3.500 2V.8 M2.500 4.500v2" />
            </Svg>
          </TrayButton>
          <TrayButton type="button" aria-label="Wi-Fi">
            <Svg w={11} sw="1">
              <path d="M1 9.500A8.500 8.500 0 0 1 9.500 1.500 M3.500 10a6 6 0 0 1 6-6 M6 10a3.500 3.500 0 0 1 3.500-3.500 M8.500 9.500h.1" />
            </Svg>
          </TrayButton>
          <TrayButton type="button" aria-label="Volume">
            <Svg w={12} h={10} sw="1">
              <path d="M1 3.500h2L5.500 1.500v7L3 6.500H1z M7.500 3.500q1 1.500 0 3 M9 2.500q1.800 2.500 0 5" />
              <path d="M10.700 1.500q2 3.500 0 7" opacity=".5" />
            </Svg>
          </TrayButton>
          <Language>ENG</Language>
          <Clock dateTime="2020-03-22T10:49">10:49 AM<br />3/22/2020</Clock>
          <ActionCenter type="button" aria-label="Notifications">
            <Svg w={12} sw="1">
              <path d="M1 1h10v7.500H8.500V11L6 8.500H1z" {...solid} />
              <path d="M3 3.500h6 M3 5.800h4" stroke="#16263f" />
            </Svg>
          </ActionCenter>
          <ShowDesktop type="button" aria-label="Show desktop" />
        </Tray>
      </Taskbar>
    </Window>
  );
}
